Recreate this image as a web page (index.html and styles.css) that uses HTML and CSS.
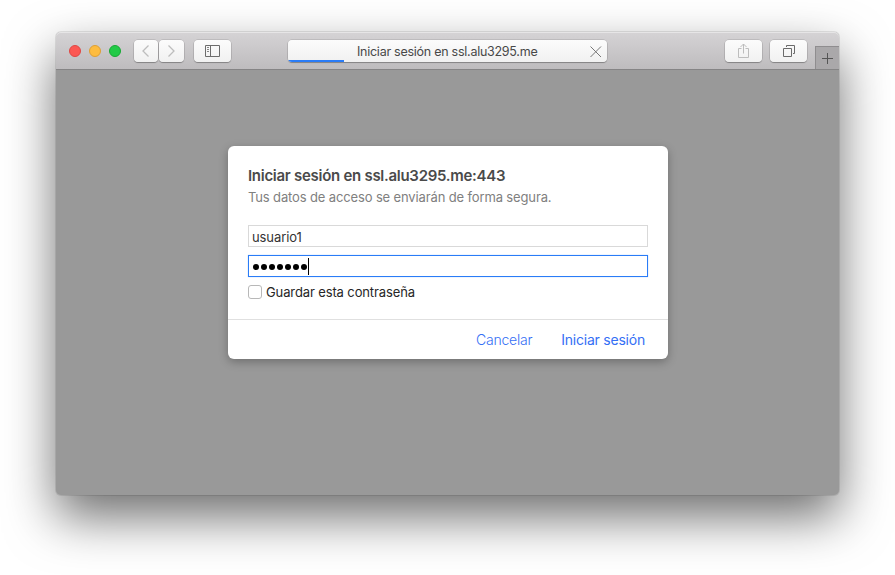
FILE: index.html
```
<!DOCTYPE html>
<html lang="es">
<head>
<meta charset="utf-8">
<title>Iniciar sesión en ssl.alu3295.me</title>
<link rel="stylesheet" href="styles.css">
</head>
<body>
<div class="window">
  <header class="toolbar">
    <div class="lights"><i class="light red"></i><i class="light yellow"></i><i class="light green"></i></div>
    <div class="nav">
      <div class="button back"><svg width="24" height="22" viewBox="0 0 24 22"><path d="M14.500 5.500 9 11l5.500 5.500" stroke="#bdbdbd"/></svg></div>
      <div class="button forward"><svg width="25" height="22" viewBox="0 0 25 22"><path d="M9.500 5.500 15 11l-5.500 5.500" stroke="#bdbdbd"/></svg></div>
    </div>
    <div class="button sidebar"><svg width="37" height="22" viewBox="0 0 37 22"><path d="M11.500 5.500h14v11h-14zM16.500 5.500v11" stroke="#6c6c6c"/><path d="M13 7.500h2M13 9.500h2M13 11.500h2" stroke="#858585"/></svg></div>
    <div class="address">
      <span class="page-title">Iniciar sesión en ssl.alu3295.me</span>
      <svg class="stop" width="12" height="12" viewBox="0 0 12 12"><path d="m.5 .5 10.500 10.500M11 .5.5 11" stroke="#777"/></svg>
      <i class="progress"></i>
    </div>
    <div class="button share"><svg width="37" height="22" viewBox="0 0 37 22"><path d="M16.500 8.500h-3v9h10v-9h-3M18.500 13.500V4M15.500 7l3-3 3 3" stroke="#bdbdbd"/></svg></div>
    <div class="button tabs"><svg width="37" height="22" viewBox="0 0 37 22"><path d="M13.500 8.500h8v8h-8zM16.500 7V5.500h8v8H23" stroke="#6a6a6a"/></svg></div>
    <div class="new-tab"><svg width="24" height="23" viewBox="0 0 24 23"><path d="M7 12.500h11M12.500 7v11" stroke="#555"/></svg></div>
  </header>
  <main class="content">
    <form class="dialog">
      <div class="fields">
        <h1><span class="heading">Iniciar sesión en ssl.alu3295.me:443</span></h1>
        <p><span class="note">Tus datos de acceso se enviarán de forma segura.</span></p>
        <div class="input"><span class="user">usuario1</span></div>
        <div class="input focused"><span class="dots"><i></i><i></i><i></i><i></i><i></i><i></i><i></i></span><i class="caret"></i></div>
        <div class="remember"><i class="checkbox"></i><span class="remember-text">Guardar esta contraseña</span></div>
      </div>
      <footer class="actions"><span class="cancel">Cancelar</span><span class="submit">Iniciar sesión</span></footer>
    </form>
  </main>
</div>
</body>
</html>
```
FILE: styles.css
```
* { box-sizing: border-box; }
body {
  margin: 0;
  height: 575px;
  padding: 32px 56px 0;
  overflow: hidden;
  background: #fff;
  font-family: Inter, "Liberation Sans", sans-serif;
  font-size: 13px;
}
svg { display: block; fill: none; }
span { white-space: nowrap; }
.window {
  width: 783px;
  height: 463px;
  border-radius: 5px;
  background: #999;
  box-shadow: 0 0 0 1px rgba(0, 0, 0, .09), 0 22px 50px rgba(0, 0, 0, .57);
}
.toolbar {
  display: flex;
  height: 38px;
  padding: 8px 0 0 13px;
  border-radius: 5px 5px 0 0;
  border-bottom: 1px solid #858485;
  background: linear-gradient(#d5d3d5, #bebcbe);
  box-shadow: inset 0 1px #e6e5e6;
}
.lights { display: flex; gap: 8px; width: 65px; padding-top: 5px; }
.light { width: 12px; height: 12px; border-radius: 50%; }
.red { background: #fc5753; border: 1px solid #df4744; }
.yellow { background: #fdbc40; border: 1px solid #de9f34; }
.green { background: #22ca47; border: 1px solid #17a934; }
.button, .address {
  height: 22px;
  border-radius: 4px;
  background: linear-gradient(#fcfcfc, #f1f1f1);
  box-shadow: 0 0 0 .5px rgba(0, 0, 0, .18), 0 1px 1px rgba(0, 0, 0, .25);
}
.nav { display: flex; gap: 1px; }
.back { width: 24px; }
.forward { width: 25px; }
.back svg path, .forward svg path { stroke-width: 1.3; }
.sidebar { width: 37px; margin-left: 10px; }
.address {
  position: relative;
  display: flex;
  align-items: center;
  width: 319px;
  margin-left: 57px;
  padding-left: 69px;
  overflow: hidden;
}
.page-title { width: 181px; padding-top: 2px; color: #484848; font-size: 12.500px; line-height: 22px; letter-spacing: -.26px; }
.stop { margin: 1px 0 0 52px; }
.progress { position: absolute; left: 0; bottom: 0; width: 56px; height: 2px; background: #2a7cf7; }
.share { width: 37px; margin-left: 118px; }
.tabs { width: 37px; margin-left: 8px; }
.new-tab {
  width: 24px;
  height: 23px;
  margin: 6px 0 0 8px;
  border: solid #8f8d8f;
  border-width: 1px 0 0 1px;
  background: #aaa8aa;
}
.new-tab svg { margin: -1px 0 0 -1px; }
.content { display: flex; justify-content: center; padding: 76px 0 0 1px; }
.dialog {
  width: 440px;
  height: 213px;
  border-radius: 6px;
  background: #fff;
  box-shadow: 0 3px 10px rgba(0, 0, 0, .28);
}
.fields { height: 173px; padding: 20px 20px 0; }
h1 { margin: 0; height: 20px; font-size: 15px; line-height: 20px; font-weight: 600; letter-spacing: -.28px; color: #4a4a4a; }
p { margin: 2px 0 19px; height: 18px; line-height: 18px; letter-spacing: -.135px; color: #808080; }
.input {
  display: flex;
  align-items: center;
  height: 22px;
  margin-bottom: 8px;
  padding: 2px 3px 0;
  border: 1px solid #d9d9d9;
  letter-spacing: -.1px;
  color: #333;
}
.focused { border-color: #2a7cf7; padding-top: 0; box-shadow: 0 0 1px #9dc2fb; }
.dots { display: flex; gap: 2px; padding: 2px 0 0 1px; }
.dots i { width: 6px; height: 6px; border-radius: 50%; background: #000; }
.caret { width: 1px; height: 17px; margin-left: .5px; background: #000; }
.remember { display: flex; align-items: center; height: 14px; gap: 4px; letter-spacing: -.12px; color: #262626; }
.checkbox { width: 14px; height: 14px; border: 1px solid #b8b8b8; border-radius: 3px; }
.actions {
  display: flex;
  height: 40px;
  padding: 0 23px 0 248px;
  border-top: 1px solid #e0e0e0;
  justify-content: space-between;
  font-size: 14px;
  line-height: 40px;
  letter-spacing: -.22px;
  color: #356ff5;
}
.cancel { font-weight: 300; }
```
